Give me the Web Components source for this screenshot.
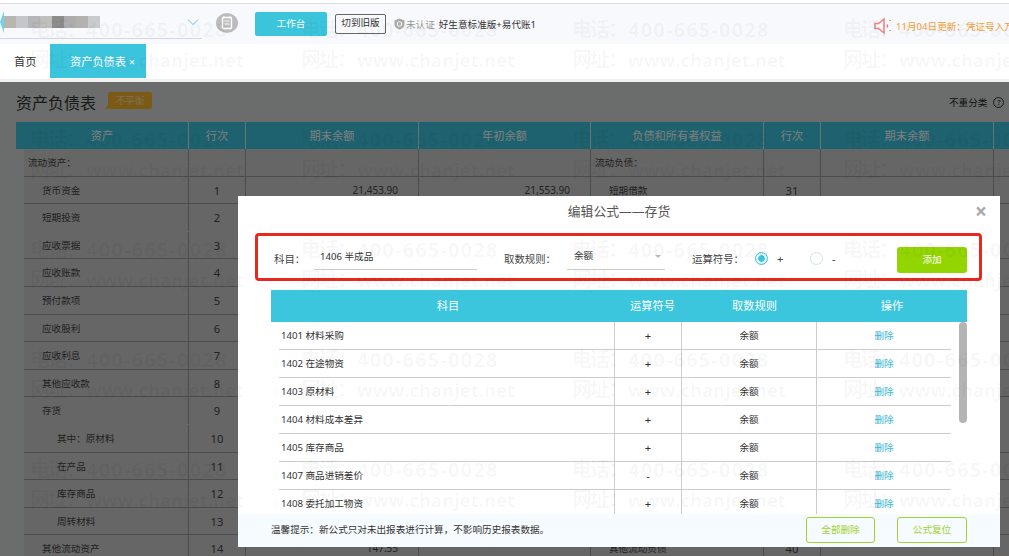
<!DOCTYPE html>
<html lang="zh">
<head>
<meta charset="utf-8">
<title>资产负债表</title>
<style>
  html, body {
    margin: 0;
    height: 556px;
    overflow: hidden;
    background: #fff;
    font-family: "Noto Sans", "Noto Sans CJK SC", sans-serif;
    font-size: 9.6px;
    color: #333;
  }
  #page {
    position: relative;
    width: 1009px;
    height: 556px;
    overflow: hidden;
  }
</style>
</head>
<body>
<div id="page">
  <top-bar></top-bar>
  <tab-bar></tab-bar>
  <report-sheet></report-sheet>
  <modal-scrim></modal-scrim>
  <formula-dialog title="编辑公式——存货"></formula-dialog>
  <water-mark></water-mark>
</div>

<script>
// <top-bar>
class TopBar extends HTMLElement {
  constructor() {
    super();
    this.attachShadow({mode: 'open'});
  }

  connectedCallback() {
    const blocks = ['#b9b6b2', '#c4c6c8', '#b6b6b8', '#bfc0be', '#8d8c8c', '#acacae', '#b4b2b0', '#c9cacd'];

    this.shadowRoot.innerHTML = `
      <style>
        :host {
          display: flex;
          align-items: center;
          height: 40px;
          border-top: 1px solid #ddd;
          margin-top: 3px;
          background: #f8f9fd;
          white-space: nowrap;
        }
        .company {
          display: flex;
          align-items: center;
          width: 202px;
          height: 34px;
          margin-top: -4px;
          box-sizing: border-box;
          border-bottom: 1px solid #d5d7dc;
        }
        .arrow {
          width: 0;
          height: 0;
          border: 11px solid transparent;
          border-left: 0;
          border-right: 4px solid #6fd2e6;
        }
        .mosaic {
          display: flex;
          flex: none;
        }
        .mosaic i {
          width: 12px;
          height: 12px;
        }
        .chevron { margin-left: 87px; flex: none; }
        .round { margin: -3px 0 0 14px; flex: none; }
        .work {
          width: 72px;
          height: 24px;
          margin: -1px 0 0 17px;
          border-radius: 2px;
          background: #3bc5dd;
          color: #fff;
          text-align: center;
          line-height: 24px;
        }
        .old {
          width: 49px;
          height: 18px;
          margin: -1px 0 0 8px;
          border: 1px solid #666;
          border-radius: 2px;
          text-align: center;
          line-height: 16px;
          color: #333;
        }
        .shield { margin: -1px 0 0 8px; flex: none; }
        .unverified { margin: -1px 0 0 1px; color: #999; }
        .edition { margin: -1px 0 0 4px; color: #333; }
        .notice {
          display: flex;
          align-items: center;
          margin-left: auto;
          width: 135px;
          overflow: hidden;
          margin-top: 4px;
          color: #f5a033;
        }
        .notice svg { flex: none; margin-right: 5px; }
      </style>
      <div class="company">
        <span class="arrow"></span>
        <span class="mosaic">${blocks.map(c => `<i style="background:${c}"></i>`).join('')}</span>
        <svg class="chevron" width="12" height="8" viewBox="0 0 12 8" fill="none" stroke="#6cc3d8" stroke-width="1"><path d="M1 1.5 6 6.5 11 1.5"/></svg>
      </div>
      <svg class="round" width="22" height="20" viewBox="0 0 22 20">
        <ellipse cx="11" cy="10" rx="11" ry="10" fill="#bcbcbc"/>
        <rect x="6.5" y="4.5" width="9" height="11" rx="1" fill="none" stroke="#fff" stroke-width="1.4"/>
        <path d="M8.500 8h5M8.500 11h5M8 3v2.500M14 3v2.500" stroke="#fff" stroke-width="1.200"/>
      </svg>
      <div class="work">工作台</div>
      <div class="old">切到旧版</div>
      <svg class="shield" width="11" height="12" viewBox="0 0 11 12">
        <path d="M5.500.5 10.500 2.500V6.500C10.500 9 8 11 5.500 11.500 3 11 .5 9 .5 6.500V2.500Z" fill="#aaa"/>
        <circle cx="5.5" cy="6" r="2.300" fill="none" stroke="#fff"/>
      </svg>
      <span class="unverified">未认证</span>
      <span class="edition">好生意标准版+易代账1</span>
      <div class="notice">
        <svg width="17" height="20" viewBox="0 0 17 20" fill="none" stroke="#ef7f7f" stroke-width="1.500">
          <path d="M1 7.500H4.500L10 3V17L4.500 12.500H1Z"/>
          <path d="M13 8.500C13.800 9.500 13.800 10.500 13 11.500"/>
          <path d="M16 4v2M16 14v2" stroke-dasharray="1 1"/>
        </svg>
        <span>11月04日更新：凭证号入万</span>
      </div>
    `;
  }
}
customElements.define('top-bar', TopBar);

// <tab-bar>
class TabBar extends HTMLElement {
  constructor() {
    super();
    this.attachShadow({mode: 'open'});
  }

  connectedCallback() {
    this.shadowRoot.innerHTML = `
      <style>
        :host {
          display: flex;
          height: 38px;
          box-sizing: border-box;
          border-bottom: 3px solid #f0f0f0;
          background: #fff;
          white-space: nowrap;
          font-size: 11.2px;
          line-height: 36px;
        }
        .home {
          width: 50px;
          height: 34px;
          box-sizing: border-box;
          padding-left: 14px;
          color: #333;
        }
        .active {
          width: 96px;
          height: 34px;
          box-sizing: border-box;
          padding-left: 20px;
          background: #3bc5dd;
          color: #fff;
        }
      </style>
      <div class="home">首页</div>
      <div class="active">资产负债表 ×</div>
    `;
  }
}
customElements.define('tab-bar', TabBar);

// <report-sheet>
class ReportSheet extends HTMLElement {
  constructor() {
    super();
    this.attachShadow({mode: 'open'});
  }

  connectedCallback() {
    // name, indent level, line, end balance, year start, liability name, level, line, no bottom rule
    const rows = [
      ['流动资产：', 0, '', '', '', '流动负债：', 0, '', false],
      ['货币资金', 1, '1', '21,453.90', '21,553.90', '短期借款', 1, '31', false],
      ['短期投资', 1, '2', '', '', '', 1, '', true],
      ['应收票据', 1, '3', '', '', '', 1, '', false],
      ['应收账款', 1, '4', '', '', '', 1, '', false],
      ['预付款项', 1, '5', '', '', '', 1, '', false],
      ['应收股利', 1, '6', '', '', '', 1, '', false],
      ['应收利息', 1, '7', '', '', '', 1, '', false],
      ['其他应收款', 1, '8', '', '', '', 1, '', false],
      ['存货', 1, '9', '', '', '', 1, '', true],
      ['其中：原材料', 2, '10', '', '', '', 1, '', false],
      ['在产品', 2, '11', '', '', '', 1, '', false],
      ['库存商品', 2, '12', '', '', '', 1, '', false],
      ['周转材料', 2, '13', '', '', '', 1, '', false],
      ['其他流动资产', 1, '14', '147.55', '', '其他流动负债', 1, '40', false]
    ];
    const pad = [4, 18, 33];

    const body = rows.map(r => `
      <div class="row ${r[8] ? 'plain' : ''}">
        <div style="padding-left:${pad[r[1]]}px">${r[0]}</div>
        <div class="mid">${r[2]}</div>
        <div class="num">${r[3]}</div>
        <div class="num">${r[4]}</div>
        <div style="padding-left:${pad[r[6]]}px">${r[5]}</div>
        <div class="mid">${r[7]}</div>
        <div class="num"></div>
        <div></div>
      </div>`).join('');

    this.shadowRoot.innerHTML = `
      <style>
        :host {
          display: block;
          height: 474px;
          padding-left: 16px;
          background: #d6d8d8;
          white-space: nowrap;
          color: #444;
        }
        .head {
          display: flex;
          align-items: center;
          height: 40px;
        }
        h1 {
          margin: 0;
          font-size: 16px;
          font-weight: 400;
          color: #333;
        }
        .badge {
          position: relative;
          width: 44px;
          height: 17px;
          margin: -4px 0 0 12px;
          border-radius: 2px;
          background: #f5b52a;
          color: #ffe0a0;
          font-size: 9.6px;
          line-height: 17px;
          text-align: center;
        }
        .badge::before {
          content: '';
          position: absolute;
          left: -3px;
          bottom: 0;
          border-bottom: 4px solid #f5b52a;
          border-left: 3px solid transparent;
        }
        .reclass {
          margin: 0 0 0 auto;
          width: 60px;
          display: flex;
          align-items: center;
          gap: 6px;
          color: #222;
        }
        .help {
          width: 9px;
          height: 9px;
          flex: none;
          border: 1px solid #333;
          border-radius: 50%;
          font-size: 7.5px;
          line-height: 9px;
          text-align: center;
        }
        .cols, .row {
          display: grid;
          grid-template-columns: 173px 57px 173px 172px 173px 57px 173px 40px;
        }
        .cols {
          height: 27px;
          background: #3bc5dd;
          color: #fff;
          font-size: 11.2px;
          line-height: 27px;
          text-align: center;
        }
        .cols div { border-right: 1px solid #d4e8ec; box-sizing: border-box; }
        .row {
          grid-template-columns: 165px 57px 173px 172px 173px 57px 173px 40px;
          margin-left: 8px;
          height: 27.6px;
          line-height: 27px;
          box-sizing: border-box;
          background: #ccc;
          border-bottom: 1px solid #999;
        }
        .row.plain { border-bottom-color: transparent; }
        .row div { border-right: 1px solid #999; box-sizing: border-box; }
        .mid { text-align: center; font-size: 11.200px; }
        .num { text-align: right; padding-right: 20px; font-size: 10px; }
      </style>
      <div class="head">
        <h1>资产负债表</h1>
        <span class="badge">不平衡</span>
        <span class="reclass">不重分类 <span class="help">?</span></span>
      </div>
      <div class="cols">
        <div>资产</div><div>行次</div><div>期末余额</div><div>年初余额</div>
        <div>负债和所有者权益</div><div>行次</div><div>期末余额</div><div></div>
      </div>
      ${body}
    `;
  }
}
customElements.define('report-sheet', ReportSheet);

// <modal-scrim>
class ModalScrim extends HTMLElement {
  constructor() {
    super();
    this.attachShadow({mode: 'open'});
  }

  connectedCallback() {
    this.shadowRoot.innerHTML = `
      <style>
        :host {
          display: block;
          position: absolute;
          left: 0;
          right: 0;
          top: 82px;
          bottom: 0;
          background: rgba(0, 0, 0, .5);
        }
      </style>
    `;
  }
}
customElements.define('modal-scrim', ModalScrim);

// <formula-row>
class FormulaRow extends HTMLElement {
  constructor() {
    super();
    this.attachShadow({mode: 'open'});
  }

  connectedCallback() {
    this.shadowRoot.innerHTML = `
      <style>
        :host {
          display: grid;
          grid-template-columns: 336px 67px 135px 134px;
          height: 28px;
          box-sizing: border-box;
          border-bottom: 1px solid #ccc;
          line-height: 27px;
          color: #333;
        }
        div { box-sizing: border-box; height: 28px; }
        .name { padding-left: 2px; border-right: 1px solid #ccc; }
        .sign { text-align: center; border-right: 1px solid #ccc; font-size: 11.2px; }
        .rule { text-align: center; border-right: 1px solid #ccc; }
        .ops { text-align: center; color: #3bb6d3; }
      </style>
      <div class="name">${this.getAttribute('name')}</div>
      <div class="sign">${this.getAttribute('sign') || '+'}</div>
      <div class="rule">余额</div>
      <div class="ops">删除</div>
    `;
  }
}
customElements.define('formula-row', FormulaRow);

// <formula-dialog>
class FormulaDialog extends HTMLElement {
  constructor() {
    super();
    this.attachShadow({mode: 'open'});
  }

  connectedCallback() {
    const items = [
      ['1401 材料采购'], ['1402 在途物资'], ['1403 原材料'], ['1404 材料成本差异'],
      ['1405 库存商品'], ['1407 商品进销差价', '-'], ['1408 委托加工物资', '+']
    ];

    this.shadowRoot.innerHTML = `
      <style>
        :host {
          display: flex;
          flex-direction: column;
          position: absolute;
          left: 238px;
          top: 196px;
          width: 762px;
          height: 351px;
          background: #fff;
          white-space: nowrap;
          color: #444;
        }
        .title {
          position: relative;
          flex: none;
          height: 37px;
          text-align: center;
          font-size: 12.8px;
          line-height: 30px;
          color: #555;
        }
        .close {
          position: absolute;
          right: 13px;
          top: 0;
          color: #aaa;
          font-size: 21px;
          font-weight: 700;
          line-height: 30px;
        }
        .form {
          display: flex;
          align-items: center;
          flex: none;
          height: 48px;
          box-sizing: border-box;
          margin: 0 18px 0 17px;
          padding: 0 12px 0 16px;
          border: 3px solid #e8281e;
          border-radius: 4px;
          font-size: 10.4px;
        }
        .label { padding-top: 3px; flex: none; }
        .field {
          flex: none;
          box-sizing: border-box;
          height: 26px;
          margin-top: -1px;
          line-height: 26px;
          border-bottom: 1px solid #ccc;
          font-size: 9.6px;
          color: #333;
        }
        .lab-subject { width: 40px; }
        .subject { width: 163px; padding-left: 6px; }
        .rule {
          display: flex;
          justify-content: space-between;
          align-items: center;
          width: 98px;
          padding: 0 4px 0 7px;
        }
        .rule i {
          border: 3.500px solid transparent;
          border-top: 3.500px solid #bbb;
          border-bottom: 0;
        }
        .lab-rule { width: 63px; margin-left: 27px; }
        .lab-sign { width: 63px; margin-left: 27px; }
        .radio {
          flex: none;
          box-sizing: border-box;
          width: 13px;
          height: 13px;
          margin-top: 3px;
          border: 1px solid #cfe3ea;
          border-radius: 50%;
          background: #fff;
        }
        .radio.on {
          border: 1px solid #3bc5dd;
          background: radial-gradient(circle, #3bc5dd 0 3px, #e3f5f9 3.500px);
        }
        .sym { margin: 3px 0 0 9px; width: 33px; font-size: 11.2px; flex: none; }
        .add {
          flex: none;
          width: 70px;
          height: 26px;
          margin: 6px 0 0 auto;
          border-radius: 3px;
          background: #93d500;
          color: #fff;
          text-align: center;
          line-height: 26px;
          font-size: 9.6px;
        }
        .list {
          position: relative;
          flex: 1;
          margin: 9px 33px 0 33px;
          overflow: hidden;
          min-height: 0;
        }
        .list-head {
          display: grid;
          grid-template-columns: 354px 55px 149px 126px 12px;
          height: 32px;
          background: #3bc6de;
          color: #fff;
          text-align: center;
          line-height: 32px;
          font-size: 11.2px;
        }
        .list-body {
          margin: 0 16px 0 8px;
        }
        .scroll {
          position: absolute;
          right: 0;
          top: 32px;
          width: 8px;
          height: 101px;
          border-radius: 4px;
          background: #b4b4b4;
        }
        .foot {
          display: flex;
          align-items: center;
          flex: none;
          height: 33px;
          box-sizing: border-box;
          padding: 0 33px;
          background: #f5fbfe;
        }
        .tip { flex: 1; margin-top: -3px; color: #333; }
        .ghost {
          box-sizing: border-box;
          width: 69px;
          height: 26px;
          margin: -2px 0 0 22px;
          border: 1px solid #a4d233;
          border-radius: 3px;
          color: #a4d233;
          text-align: center;
          line-height: 24px;
        }
        .ghost + .ghost { width: 70px; }
      </style>
      <div class="title">${this.getAttribute('title')}<span class="close">×</span></div>
      <div class="form">
        <span class="label lab-subject">科目：</span>
        <div class="field subject">1406 半成品</div>
        <span class="label lab-rule">取数规则：</span>
        <div class="field rule">余额<i></i></div>
        <span class="label lab-sign">运算符号：</span>
        <span class="radio on"></span><span class="sym">+</span>
        <span class="radio"></span><span class="sym">-</span>
        <div class="add">添加</div>
      </div>
      <div class="list">
        <div class="list-head"><div>科目</div><div>运算符号</div><div>取数规则</div><div>操作</div><div></div></div>
        <div class="list-body">
          ${items.map(i => `<formula-row name="${i[0]}" sign="${i[1] || '+'}"></formula-row>`).join('')}
        </div>
        <div class="scroll"></div>
      </div>
      <div class="foot">
        <span class="tip">温馨提示：新公式只对未出报表进行计算，不影响历史报表数据。</span>
        <div class="ghost">全部删除</div>
        <div class="ghost">公式复位</div>
      </div>
    `;
  }
}
customElements.define('formula-dialog', FormulaDialog);

// <water-mark>
class WaterMark extends HTMLElement {
  constructor() {
    super();
    this.attachShadow({mode: 'open'});
  }

  connectedCallback() {
    const one = `<div class="cell">
      <div class="phone"><b>电话：</b>400-665-0028</div>
      <div class="site"><b>网址：</b>www.chanjet.net</div>
    </div>`;

    this.shadowRoot.innerHTML = `
      <style>
        :host {
          display: grid;
          grid-template-columns: repeat(5, 271px);
          grid-auto-rows: 110px;
          position: absolute;
          left: 30px;
          top: 15px;
          pointer-events: none;
          font-family: "Open Sans", "Noto Sans CJK SC", sans-serif;
          font-size: 20px;
          font-weight: 700;
          color: rgba(0, 0, 0, .04);
          white-space: nowrap;
        }
        .cell { line-height: 30px; }
        b { display: inline-block; width: 56px; font-weight: 700; font-size: 20px; letter-spacing: -2px; }
        .phone { letter-spacing: 1.200px; }
        .site { font-size: 18.400px; }
      </style>
      ${one.repeat(25)}
    `;
  }
}
customElements.define('water-mark', WaterMark);
</script>
</body>
</html>
